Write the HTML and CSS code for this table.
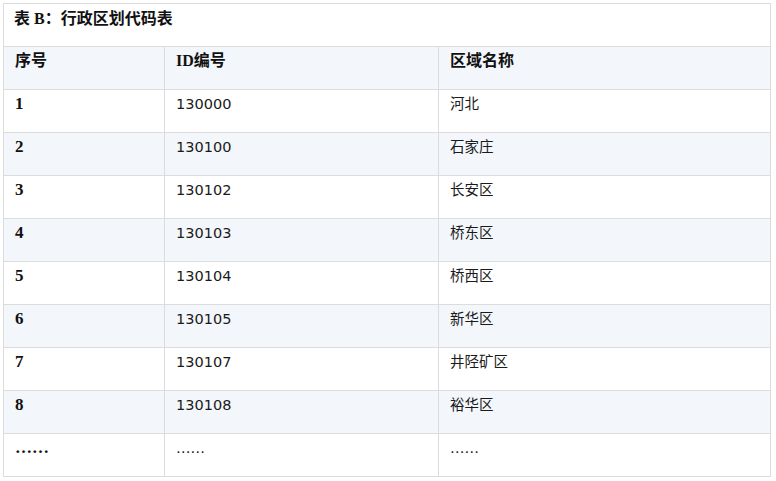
FILE: index.html
```html
<!DOCTYPE html>
<html lang="zh">
<head>
<meta charset="utf-8">
<link rel="stylesheet" href="styles.css">
</head>
<body>
<table class="code-table">
  <colgroup>
    <col class="c1"><col class="c2"><col class="c3">
  </colgroup>
  <thead>
    <tr class="title-row"><th colspan="3">表 B：行政区划代码表</th></tr>
    <tr class="head-row"><th>序号</th><th>ID编号</th><th>区域名称</th></tr>
  </thead>
  <tbody>
    <tr><td class="num">1</td><td>130000</td><td>河北</td></tr>
    <tr class="alt"><td class="num">2</td><td>130100</td><td>石家庄</td></tr>
    <tr><td class="num">3</td><td>130102</td><td>长安区</td></tr>
    <tr class="alt"><td class="num">4</td><td>130103</td><td>桥东区</td></tr>
    <tr><td class="num">5</td><td>130104</td><td>桥西区</td></tr>
    <tr class="alt"><td class="num">6</td><td>130105</td><td>新华区</td></tr>
    <tr><td class="num">7</td><td>130107</td><td>井陉矿区</td></tr>
    <tr class="alt"><td class="num">8</td><td>130108</td><td>裕华区</td></tr>
    <tr><td class="num">……</td><td>……</td><td>……</td></tr>
  </tbody>
</table>
</body>
</html>
```
FILE: styles.css
```css
html, body {
  margin: 0;
  padding: 0;
  background: #ffffff;
}
body {
  padding: 3px;
  font-family: "DejaVu Sans", "Noto Sans CJK SC", sans-serif;
  font-size: 14.5px;
  color: #1a1a1a;
}
.code-table {
  border-collapse: collapse;
  width: 767px;
  table-layout: fixed;
}
.c1 { width: 161px; }
.c2 { width: 274px; }
.c3 { width: 332px; }
.code-table th,
.code-table td {
  border: 1px solid #dcdcdc;
  height: 43px;
  box-sizing: border-box;
  padding: 4px 11px 0 11px;
  vertical-align: top;
  text-align: left;
  line-height: 20px;
}
.code-table th {
  font-family: "Liberation Serif", "Noto Sans CJK SC", serif;
  font-weight: bold;
  font-size: 16px;
  color: #111;
}
.title-row th {
  background: #ffffff;
  padding-left: 10px;
  padding-top: 5px;
}
.head-row th {
  background: #f3f6fa;
}
.alt td {
  background: #f3f6fa;
}
.code-table td.num {
  font-family: "Liberation Serif", "Noto Sans CJK SC", serif;
  font-weight: bold;
  font-size: 17px;
  color: #111;
  padding-left: 11px;
}
```
